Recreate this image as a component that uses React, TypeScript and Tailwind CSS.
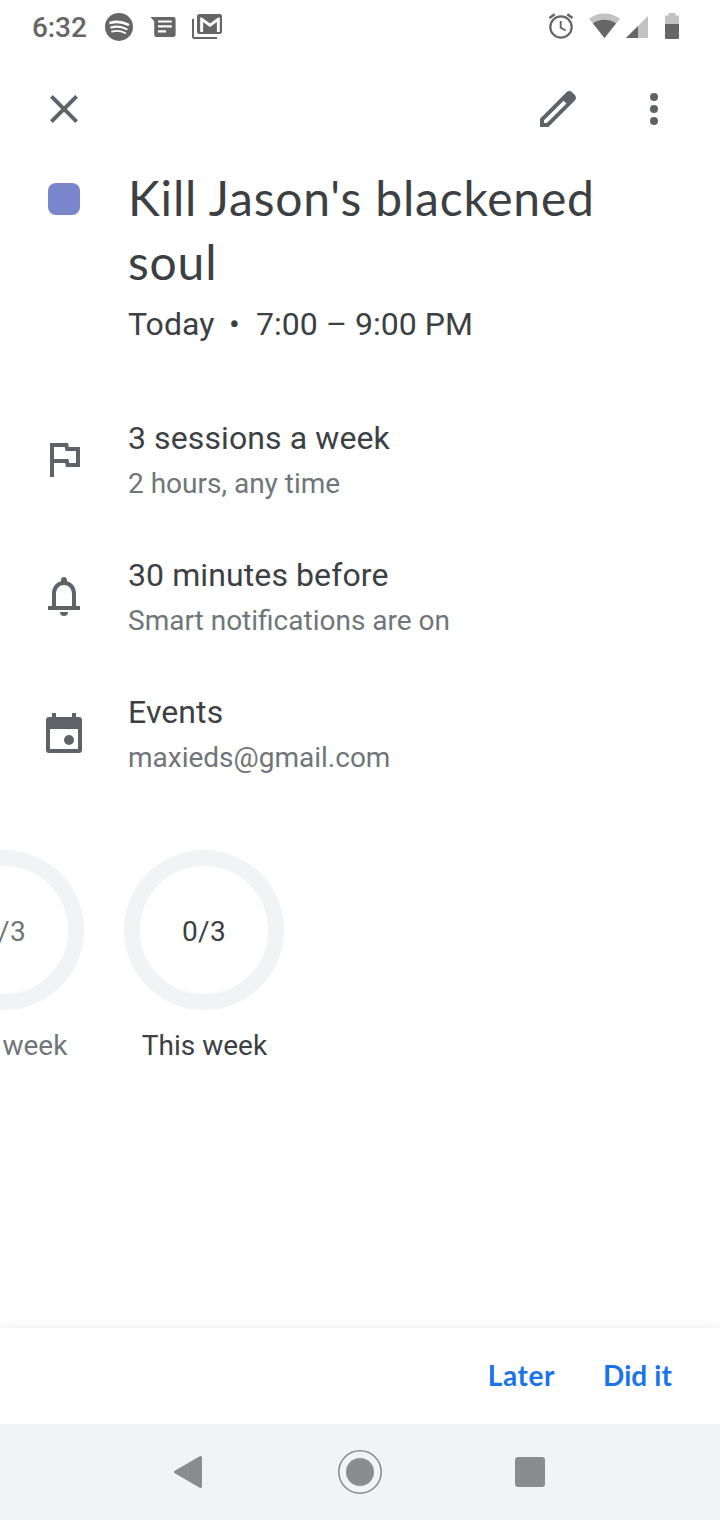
import type { ReactNode } from "react";

function StatusBar() {
  return (
    <div className="flex h-[54px] shrink-0 items-start pt-3 text-[#666]">
      <div className="ml-8 w-[72px] text-[28px] leading-[32px] font-medium tracking-[-0.1px]">6:32</div>
      <svg className="h-[30px] w-[120px]" viewBox="104 12 120 30" fill="currentColor">
        <circle cx="119" cy="26.900" r="14" />
        <g fill="none" stroke="#fff" strokeLinecap="round">
          <path d="M110.500 22.800Q119.500 20.200 128 24.600" strokeWidth="2.600" />
          <path d="M111.300 27.400Q119.300 25.200 126.600 29.100" strokeWidth="2.200" />
          <path d="M112 31.600Q119 29.800 125.200 33" strokeWidth="1.800" />
        </g>
        <path d="M150.400 17H173.300Q175.600 17 175.600 19.300V34.700Q175.600 37 173.300 37H156.500Q154.200 37 154.200 34.700V21.200Z" />
        <path fill="#fff" d="M158 20.400h13.800v2.200H158zM158 25.200h13.800v2.200H158zM158 30.200h8v2.400h-8z" />
        <path d="M199.500 14H219.500Q222 14 222 16.500V31.500Q222 34 219.500 34H199.500Q197 34 197 31.500V16.500Q197 14 199.500 14Z" />
        <path
          d="M200.200 32V17.500H201.800L210 23.500L218.200 17.500H219.800V32H216.900V21.900L210 27L203.100 21.900V32Z"
          fill="#fff"
        />
        <path d="M193 19V36.500Q193 38 194.500 38H217" fill="none" stroke="currentColor" strokeWidth="2" />
      </svg>
      <svg className="mr-10 ml-auto h-7 w-[132px]" viewBox="548 12 132 28" fill="currentColor">
        <g fill="none" stroke="currentColor">
          <circle cx="561" cy="27" r="10.700" strokeWidth="2.200" />
          <path d="M549.500 18L554.700 14.200M567.300 14.200L572.500 18" strokeWidth="2.600" />
          <path d="M560.700 21V27.700L565.700 30.500" strokeWidth="1.900" />
        </g>
        <path d="M604.500 38L589 18.700Q596 13.500 604.500 13.500T620 18.700Z" fill="#c2c2c2" />
        <path d="M604.500 38L593 23.500Q598 19.800 604.500 19.800T616 23.500Z" />
        <path d="M626 38L648 16V38Z" fill="#c2c2c2" />
        <path d="M626 38L638 26V38Z" />
        <path d="M668.500 13H675.500V15.500H678Q679 15.500 679 16.500V24H665V16.500Q665 15.500 666 15.500H668.500Z" fill="#c2c2c2" />
        <path d="M665 24H679V38Q679 39 678 39H666Q665 39 665 38Z" />
      </svg>
    </div>
  );
}

function Icon({ children }: { children: ReactNode }) {
  return (
    <svg className="size-12 shrink-0 text-[#5f6368]" viewBox="0 0 24 24" fill="currentColor">
      {children}
    </svg>
  );
}

function Toolbar() {
  return (
    <div className="flex h-[110px] shrink-0 items-center px-10">
      <Icon>
        <path d="M19 6.410L17.590 5 12 10.590 6.410 5 5 6.410 10.590 12 5 17.590 6.410 19 12 13.410 17.590 19 19 17.590 13.410 12z" />
      </Icon>
      <div className="ml-auto flex gap-12 pr-[2px]">
        <Icon>
          <path d="M20.410 4.940l-1.350-1.350c-.78-.78-2.050-.78-2.830 0L3 16.820V21h4.180L20.410 7.770c.79-.78.79-2.050 0-2.830zM6.410 19.060L5 19v-1.360l9.820-9.820 1.410 1.410-9.820 9.830z" />
        </Icon>
        <Icon>
          <circle cx="12" cy="6" r="2" />
          <circle cx="12" cy="12" r="2" />
          <circle cx="12" cy="18" r="2" />
        </Icon>
      </div>
    </div>
  );
}

function Detail({ icon, title, subtitle }: { icon: ReactNode; title: string; subtitle: string }) {
  return (
    <div className="flex h-[82px] items-start pl-10">
      <div className="pt-[17px]">
        <Icon>{icon}</Icon>
      </div>
      <div className="pl-10">
        <div className="text-[32px] leading-[40px] tracking-[0.1px] text-[#3c4043]">{title}</div>
        <div className="pt-[10px] text-[28px] leading-[32px] text-[#70757a]">{subtitle}</div>
      </div>
    </div>
  );
}

function WeekRing({ label, value, current }: { label: string; value: string; current?: boolean }) {
  return (
    <div
      className={
        current
          ? "w-40 shrink-0 text-center text-[28px] text-[#3c4043]"
          : "w-40 shrink-0 text-center text-[28px] text-[#70757a]"
      }
    >
      <div className="flex size-40 items-center justify-center rounded-full border-16 border-[#f1f3f4] pt-[3px] tracking-[0.3px]">
        {value}
      </div>
      <div className="mt-5 pl-px leading-[32px]">{label}</div>
    </div>
  );
}

export default function App() {
  return (
    <div className="flex h-[1520px] w-[720px] flex-col overflow-hidden bg-white font-['Roboto',sans-serif]">
      <StatusBar />
      <Toolbar />

      <div className="flex h-[254px] shrink-0">
        <div className="w-32 shrink-0 pt-[19px] pl-12">
          <div className="size-8 rounded-lg bg-[#7986cb]" />
        </div>
        <div className="text-[#3c4043]">
          <h1 className="w-[540px] pt-[2px] font-['Lato',sans-serif] text-[48px] leading-[64px] tracking-[0.8px]">
            Kill Jason's blackened
            <br />
            soul
          </h1>
          <div className="mt-[10px] flex text-[32px] leading-[40px] tracking-[0.05px]">
            <span className="w-[85px]">Today</span>
            <span className="w-[43px] text-center">•</span>
            <span>7:00 – 9:00 PM</span>
          </div>
        </div>
      </div>

      <div className="flex shrink-0 flex-col gap-[55px]">
        <Detail
          title="3 sessions a week"
          subtitle="2 hours, any time"
          icon={
            <path d="M12.360 6l.4 2H18v6h-3.360l-.4-2H7V6h5.360M14 4H5v17h2v-7h5.600l.4 2h7V6h-5.600L14 4z" />
          }
        />
        <Detail
          title="30 minutes before"
          subtitle="Smart notifications are on"
          icon={
            <path d="M18 17v-6c0-3.070-1.630-5.640-4.500-6.320V4c0-.83-.67-1.500-1.500-1.500s-1.500.67-1.500 1.500v.68C7.640 5.360 6 7.920 6 11v6H4v2h16v-2h-2zm-2 0H8v-6c0-2.480 1.510-4.500 4-4.500s4 2.020 4 4.500v6zM10 20h4a2 2 0 0 1-4 0z" />
          }
        />
        <Detail
          title="Events"
          subtitle="maxieds@gmail.com"
          icon={
            <>
              <path
                fillRule="evenodd"
                d="M6 2h2v2h8V2h2v2h1.500A1.500 1.500 0 0 1 21 5.500v15a1.500 1.500 0 0 1-1.500 1.500h-15A1.500 1.500 0 0 1 3 20.500v-15A1.500 1.500 0 0 1 4.500 4H6zM5 10v10h14V10z"
              />
              <circle cx="14.500" cy="15.500" r="2.500" />
            </>
          }
        />
      </div>

      <div className="mt-[76px] -ml-[76px] flex shrink-0 gap-10">
        <WeekRing label="Last week" value="0/3" />
        <WeekRing label="This week" value="0/3" current />
      </div>

      <div className="mt-auto flex h-24 shrink-0 items-center justify-end gap-12 bg-white pr-12 pb-[2px] font-['Lato',sans-serif] text-[28px] font-bold text-[#1a73e8] shadow-[0_0_12px_rgba(0,0,0,0.08)]">
        <button className="tracking-[0.6px]">Later</button>
        <button className="tracking-[0.1px]">Did it</button>
      </div>
      <div className="flex h-24 shrink-0 bg-[#f1f3f4]">
        <svg className="h-24 w-[720px]" viewBox="0 0 720 96" fill="#8b8c8e">
          <path d="M175.500 48L200.500 33.500V62.500Z" stroke="#8b8c8e" strokeWidth="3" strokeLinejoin="round" />
          <circle cx="360" cy="48" r="21.200" fill="none" stroke="#8b8c8e" strokeWidth="1.600" />
          <circle cx="360" cy="48" r="14" />
          <rect x="515" y="33" width="30" height="30" rx="3" />
        </svg>
      </div>
    </div>
  );
}
